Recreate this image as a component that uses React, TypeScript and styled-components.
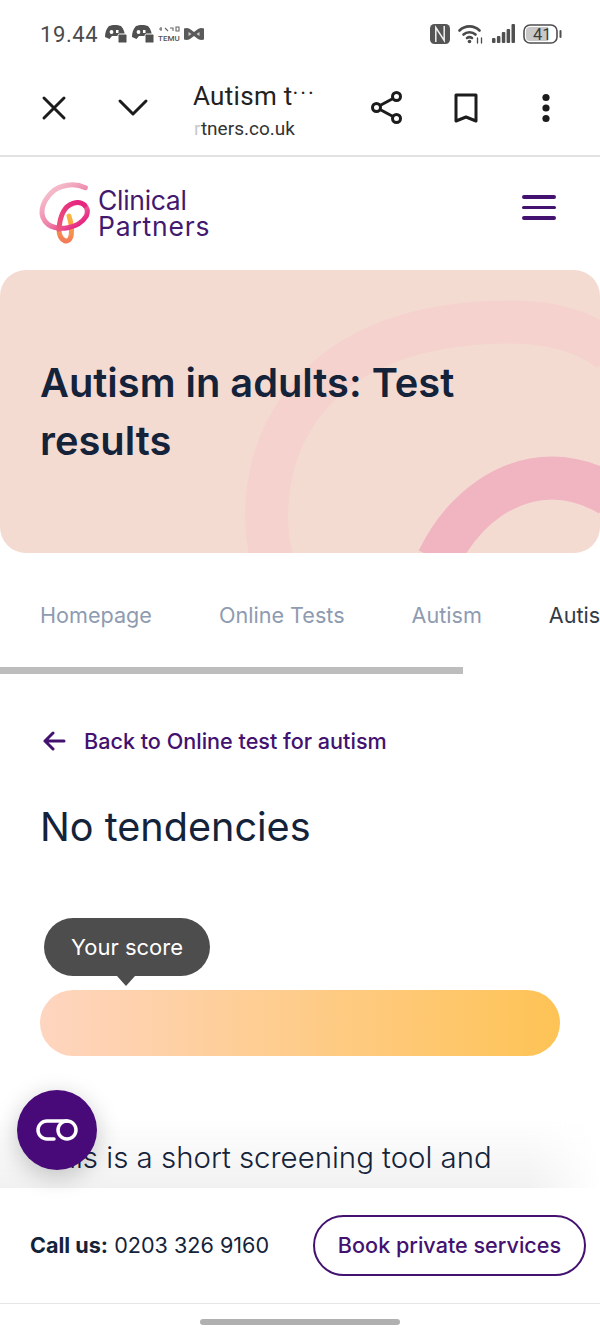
import React from "react";
import styled, { createGlobalStyle } from "styled-components";

const Global = createGlobalStyle`
  html, body { margin: 0; padding: 0; background: #fff; }
  * { box-sizing: border-box; }
`;

const Page = styled.div`
  width: 600px;
  height: 1340px;
  overflow: hidden;
  position: relative;
  display: flex;
  flex-direction: column;
  background: #fff;
  font-family: Inter, "Liberation Sans", sans-serif;
`;

const StatusBar = styled.div`
  height: 68px;
  flex: none;
  padding: 0 38px 0 40px;
  display: flex;
  align-items: center;
  justify-content: space-between;
  color: #4a4a4a;
`;
const StatusGroup = styled.div<{ $gap: number }>`
  display: flex;
  align-items: center;
  gap: ${(p) => p.$gap}px;
`;
const Clock = styled.span`
  font-family: Roboto, sans-serif;
  font-size: 22px;
  letter-spacing: 0.6px;
  margin-right: 3px;
`;

const Toolbar = styled.div`
  height: 89px;
  flex: none;
  display: flex;
  align-items: center;
  border-bottom: 2px solid #e2e2e2;
  padding-bottom: 8px;
`;
const ToolButton = styled.div<{ $w: number }>`
  width: ${(p) => p.$w}px;
  flex: none;
  display: flex;
  justify-content: center;
  align-items: center;
  color: #1c1c1c;
`;
const TitleBlock = styled.div`
  width: 175px;
  margin: 4px 0 0 34px;
  flex: none;
  overflow: hidden;
`;
const TitleText = styled.div`
  font-family: Roboto, sans-serif;
  font-size: 26px;
  line-height: 32px;
  color: #222;
  white-space: nowrap;
  letter-spacing: 0.3px;
  margin-bottom: 4px;
`;
const Dots = styled.span`
  letter-spacing: 2px;
  vertical-align: 4px;
  font-size: 22px;
`;
const UrlText = styled.div`
  font-family: Roboto, sans-serif;
  font-size: 19px;
  line-height: 26px;
  color: #333;
  white-space: nowrap;
  padding-left: 1px;
`;
const Fade = styled.span`
  color: #c9c9c9;
`;

const Header = styled.div`
  height: 113px;
  flex: none;
  display: flex;
  align-items: center;
  justify-content: space-between;
  padding: 0 44px 0 38px;
`;
const LogoWrap = styled.div`
  display: flex;
  align-items: center;
  gap: 5px;
`;
const LogoText = styled.div`
  font-size: 26.5px;
  line-height: 26px;
  color: #43186f;
  margin-bottom: 2px;
`;
const LogoLine = styled.div<{ $spacing: number }>`
  letter-spacing: ${(p) => p.$spacing}px;
`;
const Burger = styled.div`
  width: 34px;
  display: flex;
  flex-direction: column;
  gap: 7px;
  margin-bottom: 12px;
`;
const BurgerBar = styled.div`
  height: 3.5px;
  border-radius: 2px;
  background: #43116f;
`;

const Hero = styled.div`
  height: 283px;
  flex: none;
  border-radius: 26px;
  background: #f4dbd2;
  position: relative;
  overflow: hidden;
  padding: 84px 40px 0;
`;
const HeroArt = styled.svg`
  position: absolute;
  inset: 0;
`;
const HeroTitle = styled.h1`
  position: relative;
  margin: 0;
  font-size: 39.8px;
  line-height: 58px;
  font-weight: 600;
  color: #14233a;
`;

const Crumbs = styled.div`
  height: 114px;
  flex: none;
  display: flex;
  align-items: center;
  gap: 67px;
  padding: 10px 0 0 40px;
  white-space: nowrap;
  overflow: hidden;
`;
const Crumb = styled.span<{ $current?: boolean }>`
  font-size: 21.6px;
  color: ${(p) => (p.$current ? "#333a45" : "#8e9bb0")};
`;
const Scrollbar = styled.div`
  width: 463px;
  height: 7px;
  flex: none;
  background: #bdbdbd;
`;

const Main = styled.div`
  flex: 1;
  min-height: 0;
  padding: 0 40px;
  position: relative;
  overflow: hidden;
`;
const BackLink = styled.div`
  margin-top: 52px;
  display: flex;
  align-items: center;
  gap: 17px;
  padding-left: 3px;
  font-size: 21.6px;
  line-height: 30px;
  font-weight: 500;
  color: #43116f;
`;
const ResultTitle = styled.h2`
  margin: 47px 0 0;
  font-size: 39.6px;
  line-height: 48px;
  font-weight: 400;
  color: #14233a;
`;
const Tooltip = styled.div`
  margin: 67px 0 0 4px;
  width: 166px;
  height: 58px;
  border-radius: 29px;
  background: #4d4d4d;
  color: #fff;
  font-size: 22px;
  display: flex;
  align-items: center;
  justify-content: center;
  position: relative;
  &::after {
    content: "";
    position: absolute;
    left: 73px;
    bottom: -10px;
    width: 0;
    height: 0;
    border-left: 9.5px solid transparent;
    border-right: 9.5px solid transparent;
    border-top: 10px solid #4d4d4d;
  }
`;
const ScoreBar = styled.div`
  margin-top: 14px;
  height: 66px;
  border-radius: 33px;
  background: linear-gradient(90deg, #fed5c0 0%, #fec355 100%);
`;
const Body = styled.p`
  position: relative;
  z-index: 1;
  margin: 79px 0 0;
  font-size: 29.4px;
  line-height: 46px;
  font-weight: 300;
  color: #14233a;
  white-space: nowrap;
`;
const BottomFade = styled.div`
  position: absolute;
  left: 0;
  right: 0;
  bottom: 0;
  height: 70px;
  background: linear-gradient(180deg, rgba(232, 232, 232, 0), rgba(232, 232, 232, 0.6));
  mask-image: linear-gradient(90deg, #000 88%, transparent 100%);
`;

const Fab = styled.div`
  position: absolute;
  z-index: 2;
  left: 17px;
  top: 1090px;
  width: 80px;
  height: 80px;
  border-radius: 50%;
  background: #470a78;
  display: flex;
  align-items: center;
  justify-content: center;
  box-shadow: 0 6px 24px rgba(0, 0, 0, 0.22);
`;

const CallBar = styled.div`
  height: 116px;
  flex: none;
  background: #fff;
  border-bottom: 1px solid #e6e6e6;
  display: flex;
  align-items: center;
  justify-content: space-between;
  padding: 0 14px 0 30px;
`;
const CallText = styled.div`
  font-size: 21.6px;
  color: #14233a;
  margin-bottom: 1px;
`;
const CallLabel = styled.b`
  font-weight: 700;
`;
const BookButton = styled.div`
  width: 273px;
  height: 61px;
  border: 2px solid #43116f;
  border-radius: 31px;
  padding-bottom: 2px;
  display: flex;
  align-items: center;
  justify-content: center;
  font-size: 21.6px;
  font-weight: 500;
  color: #43116f;
`;
const NavArea = styled.div`
  height: 36px;
  flex: none;
  display: flex;
  justify-content: center;
  padding-top: 15px;
`;
const HomeIndicator = styled.div`
  width: 200px;
  height: 6px;
  border-radius: 3px;
  background: #b0b0b0;
`;

const Discord = () => (
  <svg width="24" height="20" viewBox="0 0 24 20">
    <path d="M5 2 C8 0.500 14 0.500 17 2 C20 5 21 10 21 13 L17 14 L15 12 H8 L5.500 15 L1 13 C1 9 2 5 5 2Z" fill="#505050" />
    <circle cx="7.500" cy="8" r="1.900" fill="#fff" />
    <path d="M12 6h2.500v3h-2.500z" fill="#fff" />
    <rect x="14" y="10" width="9" height="9" rx="1.500" fill="#505050" stroke="#fff" strokeWidth="1" />
  </svg>
);

const Temu = () => (
  <svg width="22" height="16" viewBox="0 0 22 16">
    <path d="M1 3h3M3 1v4M7 2l3 3M12 2h3v3M18 1h3v4h-3z" stroke="#666" strokeWidth="1.100" fill="none" />
    <text x="0" y="14.500" fontFamily="Roboto, sans-serif" fontSize="8" fontWeight="500" fill="#555">
      TEMU
    </text>
  </svg>
);

const Mi = () => (
  <svg width="22" height="14" viewBox="0 0 22 14">
    <path d="M1 1.500 Q4 0.500 7 2 L11 5 L15 2 Q18 0.500 21 1.500 V12.500 Q18 13.500 15 12 L11 9 L7 12 Q4 13.500 1 12.500Z" fill="#5a5a5a" />
    <path d="M5.500 5 L8.500 7 L5.500 9Z M16.500 5 L13.500 7 L16.500 9Z" fill="#cfcfcf" />
  </svg>
);

const Nfc = () => (
  <svg width="20" height="20" viewBox="0 0 20 20">
    <rect width="20" height="20" rx="4.500" fill="#555" />
    <path d="M5.800 18V3.500L14.200 16.500V2" fill="none" stroke="#f0f0f0" strokeWidth="1.500" />
  </svg>
);

const Wifi = () => (
  <svg width="26" height="20" viewBox="0 0 26 20" fill="none" stroke="#4a4a4a" strokeWidth="2.600" strokeLinecap="round">
    <path d="M1.500 6.500C7 1 16 1 21.500 6.500" />
    <path d="M5.500 10.500C8.500 7.500 14.500 7.500 17.500 10.500" />
    <path d="M9 14C10.500 13 12.500 13 14 14" />
    <circle cx="11.500" cy="17.500" r="1.800" fill="#4a4a4a" stroke="none" />
    <path d="M19.500 14v5M23.500 14v5" strokeWidth="1.300" />
  </svg>
);

const Signal = () => (
  <svg width="23" height="20" viewBox="0 0 23 20" fill="#505050">
    <rect x="0" y="14" width="3.500" height="5" rx="1" />
    <rect x="4.900" y="12" width="3.500" height="7" rx="1" />
    <rect x="9.800" y="8" width="3.500" height="11" rx="1" />
    <rect x="14.600" y="5" width="3.500" height="14" rx="1" />
    <rect x="19.500" y="0" width="3.500" height="19" rx="1" />
  </svg>
);

const Battery = () => (
  <svg width="39" height="20" viewBox="0 0 39 20">
    <rect x="1" y="1" width="33" height="18" rx="6" fill="#fff" stroke="#4f4f4f" strokeWidth="1.600" />
    <path d="M7 3 H25 V17 H7 Q3 17 3 13 V7 Q3 3 7 3 Z" fill="#c8c8c8" />
    <rect x="36.500" y="6" width="2" height="8" rx="1" fill="#4f4f4f" />
    <text x="10" y="16" fontFamily="Roboto, sans-serif" fontSize="16.500" fill="#3c3c3c">
      41
    </text>
  </svg>
);

const Logo = () => (
  <svg width="55" height="65" viewBox="55 45 165 195" fill="none" strokeLinecap="round">
    <defs>
      <linearGradient id="lg1" gradientUnits="userSpaceOnUse" x1="110" y1="70" x2="190" y2="170">
        <stop offset="0" stopColor="#f4b8c8" />
        <stop offset="0.55" stopColor="#ee7fa8" />
        <stop offset="1" stopColor="#e6267f" />
      </linearGradient>
      <linearGradient id="lg2" gradientUnits="userSpaceOnUse" x1="150" y1="150" x2="130" y2="235">
        <stop offset="0" stopColor="#fbb63e" />
        <stop offset="1" stopColor="#f2745a" />
      </linearGradient>
      <linearGradient id="lg3" gradientUnits="userSpaceOnUse" x1="180" y1="110" x2="120" y2="200">
        <stop offset="0" stopColor="#e6267f" />
        <stop offset="1" stopColor="#ef5a7a" />
      </linearGradient>
    </defs>
    <path d="M118 190 C118 225 150 240 155 205 C157 185 153 165 148 150" stroke="url(#lg2)" strokeWidth="15" />
    <path d="M197 65 C165 50 120 55 95 80 C65 110 55 150 85 175 C115 195 175 190 200 150 C205 138 203 126 195 118" stroke="url(#lg1)" strokeWidth="15" />
    <path d="M195 118 C185 108 172 108 160 112 C130 122 120 160 118 190" stroke="url(#lg3)" strokeWidth="15" />
  </svg>
);

export default function App() {
  return (
    <Page>
      <Global />
      <StatusBar>
        <StatusGroup $gap={3}>
          <Clock>19.44</Clock>
          <Discord />
          <Discord />
          <Temu />
          <Mi />
        </StatusGroup>
        <StatusGroup $gap={8}>
          <Nfc />
          <Wifi />
          <Signal />
          <Battery />
        </StatusGroup>
      </StatusBar>

      <Toolbar>
        <ToolButton $w={107}>
          <svg width="26" height="26" viewBox="0 0 26 26" stroke="currentColor" strokeWidth="3" strokeLinecap="round">
            <path d="M3 3L23 23M23 3L3 23" />
          </svg>
        </ToolButton>
        <ToolButton $w={52}>
          <svg width="32" height="20" viewBox="0 0 32 20" fill="none" stroke="currentColor" strokeWidth="3" strokeLinecap="round" strokeLinejoin="round">
            <path d="M3 3L16 16L29 3" />
          </svg>
        </ToolButton>
        <TitleBlock>
          <TitleText>
            Autism t<Dots>···</Dots>
          </TitleText>
          <UrlText>
            <Fade>r</Fade>tners.co.uk
          </UrlText>
        </TitleBlock>
        <ToolButton $w={36}>
          <svg width="31" height="33" viewBox="0 0 31 33" fill="none" stroke="currentColor" strokeWidth="3">
            <circle cx="5.500" cy="16.500" r="4" />
            <circle cx="25.500" cy="5.500" r="4" />
            <circle cx="25.500" cy="27.500" r="4" />
            <path d="M9 14.500L22 7.500M9 18.500L22 25.500" />
          </svg>
        </ToolButton>
        <ToolButton $w={124}>
          <svg width="24" height="30" viewBox="0 0 24 30" fill="none" stroke="currentColor" strokeWidth="3" strokeLinejoin="round">
            <path d="M2 2H22V28L12 24L2 28Z" />
          </svg>
        </ToolButton>
        <ToolButton $w={36}>
          <svg width="10" height="30" viewBox="0 0 10 30" fill="currentColor">
            <circle cx="5" cy="4.500" r="3.600" />
            <circle cx="5" cy="15" r="3.600" />
            <circle cx="5" cy="25.500" r="3.600" />
          </svg>
        </ToolButton>
      </Toolbar>

      <Header>
        <LogoWrap>
          <Logo />
          <LogoText>
            <LogoLine $spacing={-0.3}>Clinical</LogoLine>
            <LogoLine $spacing={0.8}>Partners</LogoLine>
          </LogoText>
        </LogoWrap>
        <Burger>
          <BurgerBar />
          <BurgerBar />
          <BurgerBar />
        </Burger>
      </Header>

      <Hero>
        <HeroArt width="600" height="283" viewBox="0 270 600 283" fill="none">
          <path d="M272 560 C250 470 290 322 510 322 C550 322 580 330 610 350" stroke="#f5d2cd" strokeWidth="43" />
          <path d="M438 560 C465 505 510 478 552 478 C572 478 590 483 610 495" stroke="#f1b5c2" strokeWidth="43" />
        </HeroArt>
        <HeroTitle>
          Autism in adults: Test
          <br />
          results
        </HeroTitle>
      </Hero>

      <Crumbs>
        <Crumb>Homepage</Crumb>
        <Crumb>Online Tests</Crumb>
        <Crumb>Autism</Crumb>
        <Crumb $current>Autism in adults</Crumb>
      </Crumbs>
      <Scrollbar />

      <Main>
        <BackLink>
          <svg width="24" height="20" viewBox="0 0 24 20" fill="none" stroke="currentColor" strokeWidth="3" strokeLinecap="round" strokeLinejoin="round">
            <path d="M2 10H21M10 2L2 10L10 18" />
          </svg>
          Back to Online test for autism
        </BackLink>
        <ResultTitle>No tendencies</ResultTitle>
        <Tooltip>Your score</Tooltip>
        <ScoreBar />
        <Body>This is a short screening tool and</Body>
        <BottomFade />
      </Main>

      <CallBar>
        <CallText>
          <CallLabel>Call us:</CallLabel> 0203 326 9160
        </CallText>
        <BookButton>Book private services</BookButton>
      </CallBar>
      <NavArea>
        <HomeIndicator />
      </NavArea>

      <Fab>
        <svg width="42" height="22" viewBox="0 0 42 22" fill="none" stroke="#fff" strokeWidth="3.500" strokeLinecap="round">
          <path d="M18 20H11A9 9 0 0 1 11 2H31" />
          <circle cx="31" cy="11" r="9" />
        </svg>
      </Fab>
    </Page>
  );
}
